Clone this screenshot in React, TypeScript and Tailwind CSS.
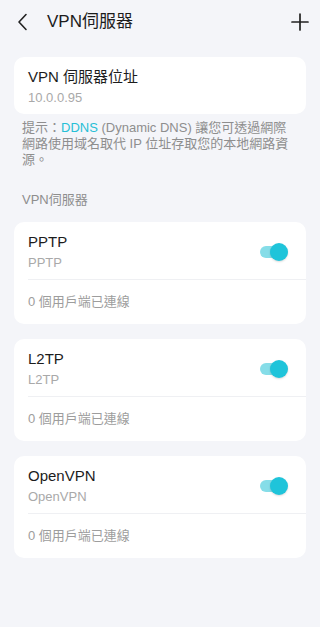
import React, { useState } from 'react';

const font = { fontFamily: '"Liberation Sans", "Noto Sans CJK TC", sans-serif' };

interface ServerCardProps {
  name: string;
  sub: string;
  clients: number;
}

const Toggle: React.FC<{ on: boolean; onClick: () => void }> = ({ on, onClick }) => (
  <button onClick={onClick} className="relative w-[30px] h-[20px] flex items-center">
    <span className={`block w-[27px] h-[12px] rounded-full ${on ? 'bg-[#86dde8]' : 'bg-[#d5d8de]'}`} />
    <span
      className={`absolute top-[1px] w-[18px] h-[18px] rounded-full shadow-[0_1px_2px_rgba(0,0,0,0.15)] ${
        on ? 'left-[10px] bg-[#1fc4da]' : 'left-[-2px] bg-white'
      }`}
    />
  </button>
);

const ServerCard: React.FC<ServerCardProps> = ({ name, sub, clients }) => {
  const [on, setOn] = useState(true);
  return (
    <div className="bg-white rounded-[10px]">
      <div className="ml-[14px] flex items-center justify-between pr-[16px] pt-[10px] pb-[7px] border-b border-[#eff0f3]">
        <div className="flex flex-col gap-[2px]">
          <span className="text-[15px] leading-[20px] text-[#1c1c1c]">{name}</span>
          <span className="text-[13px] leading-[18px] text-[#a9a9a9]">{sub}</span>
        </div>
        <Toggle on={on} onClick={() => setOn(!on)} />
      </div>
      <div className="h-[44px] flex items-center px-[14px] text-[13px] text-[#9d9d9d]">
        {clients} 個用戶端已連線
      </div>
    </div>
  );
};

export default function App() {
  const servers = [
    { name: 'PPTP', sub: 'PPTP', clients: 0 },
    { name: 'L2TP', sub: 'L2TP', clients: 0 },
    { name: 'OpenVPN', sub: 'OpenVPN', clients: 0 },
  ];

  return (
    <div className="min-h-[627px] bg-[#f4f5f9]" style={font}>
      {/* header */}
      <div className="h-[44px] flex items-center px-[14px]">
        <svg width="14" height="18" viewBox="0 0 14 18" className="ml-[2px]">
          <path d="M10 1.5 L3 9 L10 16.5" fill="none" stroke="#222" strokeWidth="1.6" strokeLinecap="round" strokeLinejoin="round" />
        </svg>
        <h1 className="ml-[17px] text-[17px] text-[#1c1c1c]">VPN伺服器</h1>
        <svg width="18" height="18" viewBox="0 0 18 18" className="ml-auto mr-[-3px]">
          <path d="M9 1 V17 M1 9 H17" fill="none" stroke="#222" strokeWidth="1.7" strokeLinecap="round" />
        </svg>
      </div>

      <div className="px-[14px]">
        {/* server address */}
        <div className="mt-[13px] bg-white rounded-[10px] px-[14px] pt-[10px] pb-[7px] flex flex-col gap-[2px]">
          <span className="text-[15px] leading-[20px] text-[#1c1c1c]">VPN 伺服器位址</span>
          <span className="text-[13px] leading-[18px] text-[#a9a9a9]">10.0.0.95</span>
        </div>

        {/* hint */}
        <div className="mt-[6px] px-[8px] text-[13px] leading-[16px] text-[#8e8e8e]">
          <p className="whitespace-nowrap">
            提示：<span className="text-[#27bfd6]">DDNS</span> (Dynamic DNS) 讓您可透過網際
          </p>
          <p className="whitespace-nowrap">網路使用域名取代 IP 位址存取您的本地網路資</p>
          <p className="whitespace-nowrap">源。</p>
        </div>

        <div className="mt-[23px] px-[8px] text-[13px] leading-[18px] text-[#8e8e8e]">VPN伺服器</div>

        <div className="mt-[13px] flex flex-col gap-[15px] pb-[20px]">
          {servers.map((s) => (
            <ServerCard key={s.name} {...s} />
          ))}
        </div>
      </div>
    </div>
  );
}
